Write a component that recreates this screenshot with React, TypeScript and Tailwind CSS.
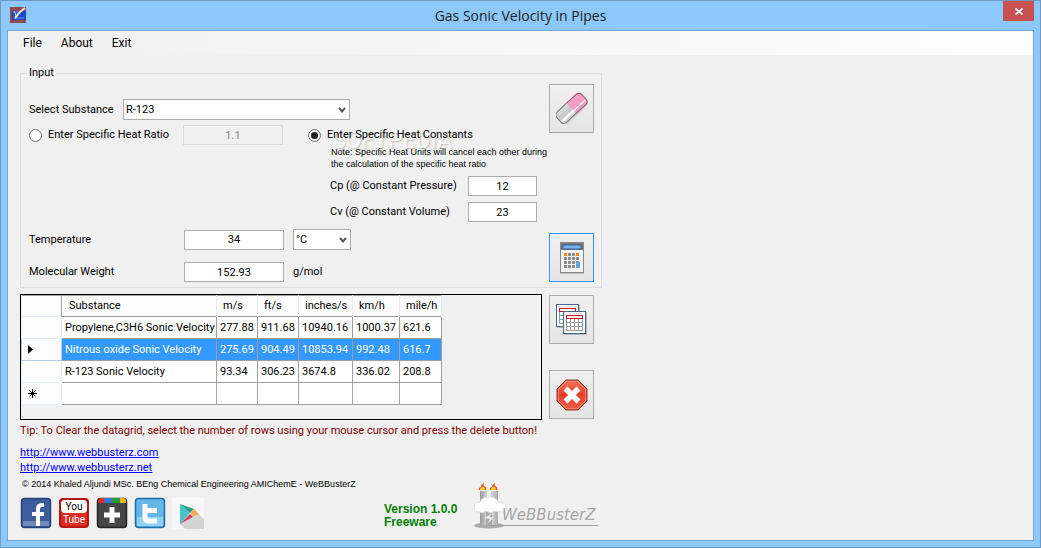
import React from 'react';

interface Reading {
  substance: string;
  values: string[];
}

const columns = ['m/s', 'ft/s', 'inches/s', 'km/h', 'mile/h'];

const readings: Reading[] = [
  { substance: 'Propylene,C3H6 Sonic Velocity', values: ['277.88', '911.68', '10940.16', '1000.37', '621.6'] },
  { substance: 'Nitrous oxide Sonic Velocity', values: ['275.69', '904.49', '10853.94', '992.48', '616.7'] },
  { substance: 'R-123 Sonic Velocity', values: ['93.34', '306.23', '3674.8', '336.02', '208.8'] },
  { substance: '', values: ['', '', '', '', ''] },
];

const SELECTED_ROW = 1;

const field = 'h-5 shrink-0 border border-[#abadb3] bg-white text-center outline-none';

function AppIcon() {
  return (
    <svg viewBox="0 0 16 16" className="h-4 w-4" aria-hidden="true">
      <rect width="16" height="16" fill="#8f4a50" />
      <rect x="2" y="4" width="14" height="9" fill="#1748c8" />
      <path d="M3 5h5M5 11h9" stroke="#6f9df2" />
      <path d="M4 4q3 4 1 8" fill="none" stroke="#c9d6f2" />
      <path d="M15 1 10 5l-5 6" fill="none" stroke="#f1dfc6" strokeWidth="2" />
    </svg>
  );
}

function EraserIcon() {
  return (
    <svg viewBox="0 0 32 32" className="h-8 w-8" aria-hidden="true">
      <defs>
        <linearGradient id="rubber" x1="0" y1="0" x2="0" y2="1">
          <stop offset="0" stopColor="#dcdcdc" />
          <stop offset=".6" stopColor="#c2c4c5" />
          <stop offset=".65" stopColor="#f4f4f4" />
          <stop offset="1" stopColor="#c8c8c8" />
        </linearGradient>
      </defs>
      <g transform="rotate(-43 16 16)">
        <rect x="-1" y="10" width="34" height="14" rx="5" fill="#000" fillOpacity=".12" />
        <path d="M16 8h13q4 0 4 5v5q0 4-4 4H16z" fill="#f2a0c2" />
        <path d="M16 8H3q-4 0-4 5v5q0 4 4 4h13z" fill="url(#rubber)" />
        <path d="M0 18.500h32" stroke="#fff" strokeWidth="1.200" />
        <path d="M16 8h13q4 0 4 5v5q0 4-4 4H16" fill="none" stroke="#a0527a" />
        <path d="M16 8H3q-4 0-4 5v5q0 4 4 4h13" fill="none" stroke="#727577" />
      </g>
    </svg>
  );
}

function CalculatorIcon() {
  const rows = [13, 17, 21, 25];
  const cols = [5, 9, 13, 17];
  return (
    <svg viewBox="0 0 24 32" className="h-8 w-6" aria-hidden="true">
      <path d="M0 31.500h24" stroke="#bbb" />
      <rect x=".5" y=".5" width="23" height="30" fill="#f3f3f3" stroke="#878787" />
      <rect x="1" y="1" width="22" height="7" fill="#777" />
      <rect x="3" y="3" width="18" height="4" fill="#73b4f2" stroke="#35618f" />
      {rows.map((y) => cols.map((x) => (
        <rect
          key={`${x}-${y}`}
          x={x - 1}
          y={y - 2}
          width="3"
          height="3"
          fill={y === 13 && (x === 5 || x === 17) ? '#f28321' : '#8b8b8b'}
        />
      )))}
      <rect x="16" y="20" width="4" height="6" fill="#5ea5e8" />
    </svg>
  );
}

function Sheet({ x, y }: { x: number; y: number }) {
  return (
    <g transform={`translate(${x} ${y})`}>
      <path d="M1 23.500h22.500V1" fill="none" stroke="#000" strokeOpacity=".2" />
      <rect x=".5" y=".5" width="22" height="22" fill="#fff" stroke="#47698e" />
      <path d="M3 2.500h17" stroke="#ddd" />
      <path d="M3.500 8v11.500h16V8M3.500 11.500h16M3.500 15.500h16M7.500 8v11.500M11.500 8v11.500M15.500 8v11.500" fill="none" stroke="#999" />
      <rect x="3.500" y="4.500" width="16" height="3" fill="#fff" stroke="#cc1219" />
    </g>
  );
}

function SheetsIcon() {
  return (
    <svg viewBox="0 0 32 32" className="h-8 w-8" aria-hidden="true">
      <Sheet x={0} y={0} />
      <Sheet x={7} y={7} />
    </svg>
  );
}

function CloseIcon() {
  return (
    <svg viewBox="0 0 32 32" className="h-8 w-8" aria-hidden="true">
      <defs>
        <linearGradient id="stop" x1="0" y1="0" x2="0" y2="1">
          <stop offset="0" stopColor="#f3795f" />
          <stop offset=".5" stopColor="#e63d28" />
          <stop offset="1" stopColor="#e86149" />
        </linearGradient>
      </defs>
      <path d="M10 1h12l9 9v12l-9 9H10l-9-9V10z" fill="url(#stop)" stroke="#9c3327" />
      <path d="M10.500 2.500h11l8 8v11l-8 8h-11l-8-8v-11z" fill="none" stroke="#f39580" strokeOpacity=".7" />
      <path d="m9.500 9.500 13 13M22.500 9.500l-13 13" stroke="#fff" strokeWidth="5.500" />
    </svg>
  );
}

function PlayIcon() {
  return (
    <svg viewBox="0 0 32 32" className="h-8 w-8" aria-hidden="true">
      <rect width="32" height="32" fill="#f7f7f7" />
      <path d="m8 27 19-10 5 5v10H13z" fill="#d3d3d3" />
      <path d="M8 7v20l10-11z" fill="#42c3c7" />
      <path d="m8 7 10 9 4-4z" fill="#2b9c88" />
      <path d="m8 27 10-10 3 3z" fill="#d73b60" />
      <path d="m18 16 4-4 5 5-6 3z" fill="#f3ad59" />
    </svg>
  );
}

function FacebookIcon() {
  return (
    <svg viewBox="0 0 32 32" className="h-8 w-8" aria-hidden="true">
      <rect x="1.500" y="1.500" width="29" height="29" rx="3" fill="#3d5c9c" stroke="#27427a" strokeWidth="1.500" />
      <path d="M3 24h26v5H3z" fill="#7188b9" />
      <path d="M16 29V19h-4v-4h4v-3q0-6 6-6h2v4h-2q-2 0-2 2v3h4v4h-4v10z" fill="#fff" />
    </svg>
  );
}

function GooglePlusIcon() {
  return (
    <svg viewBox="0 0 32 32" className="h-8 w-8" aria-hidden="true">
      <rect x="1.500" y="1.500" width="29" height="29" rx="3" fill="#464646" stroke="#222" strokeWidth="1.500" />
      <path d="M2 6V4q0-3 3-3h3v5z" fill="#e42822" />
      <path d="M8 1h8v5H8z" fill="#3874db" />
      <path d="M16 1h8v5h-8z" fill="#249a36" />
      <path d="M24 1h3q3 0 3 3v2h-6z" fill="#f2b52b" />
      <path d="M16 10v16M8 18h16" stroke="#fff" strokeWidth="5" />
    </svg>
  );
}

function TwitterIcon() {
  return (
    <svg viewBox="0 0 32 32" className="h-8 w-8" aria-hidden="true">
      <rect x="1.500" y="1.500" width="29" height="29" rx="3" fill="#66b7e9" stroke="#1e6da5" strokeWidth="1.500" />
      <path d="M3 20h26v9H3z" fill="#91d2f3" />
      <path d="M11 7v13q0 4 4 4h8M11 13.500h12" fill="none" stroke="#fff" strokeWidth="5" strokeLinejoin="round" />
    </svg>
  );
}

function FactoryLogo() {
  return (
    <div className="relative h-12 w-31">
      <svg viewBox="0 0 124 48" className="h-12 w-31" aria-hidden="true">
        <defs>
          <linearGradient id="stack">
            <stop offset="0" stopColor="#999" />
            <stop offset=".5" stopColor="#e4e4e4" />
            <stop offset="1" stopColor="#aaa" />
          </linearGradient>
        </defs>
        <g transform="translate(0 2)">
          <ellipse cx="15" cy="42.500" rx="15" ry="3" fill="#aaa" />
          <path d="M15 42.500h109" stroke="#a0a0a0" />
          <path d="M6 8h7v34H6zM17 8h7v34h-7z" fill="url(#stack)" />
          <path d="M12 26h6v16h-6z" fill="#aaa" />
          <path d="M5 7q-1-2 2-3 0-3 3-4-1 3 2 4 1 1 0 3zM16 7q-1-2 2-3 0-3 3-4-1 3 2 4 1 1 0 3z" fill="#e55924" />
          <path d="M6 7q0-2 2-3 1 1 1-1 3 3 1 4zM17 7q0-2 2-3 1 1 1-1 3 3 1 4z" fill="#f9d329" />
          <path d="M5 29q-5 0-5-5t6-5q2-5 9-5t9 5q8 0 8 5t-5 5l-7-1-3 2-5-2q-4 3-7 1z" fill="#fff" stroke="#ddd" />
          <path d="m19 30-9 5 6 1-3 5 7-7-5 0z" fill="#ececec" />
        </g>
      </svg>
      <span className="absolute top-[18px] left-7 font-['DejaVu_Sans'] text-[15px] leading-8 text-[#a5a5a5] italic">WeBBusterZ</span>
    </div>
  );
}

function ToolButton({ label, focused, children }: { label: string; focused?: boolean; children: React.ReactNode }) {
  return (
    <button
      type="button"
      aria-label={label}
      className={`flex h-[49px] w-[45px] shrink-0 items-center justify-center border bg-linear-to-b from-[#f0f0f0] to-[#e5e5e5] ${focused ? 'border-[#3399ff]' : 'border-[#acacac]'}`}
    >
      {children}
    </button>
  );
}

function Select({ id, value, label, className }: { id: string; value: string; label?: string; className: string }) {
  return (
    <div className={`relative h-[21px] shrink-0 ${className}`}>
      <select
        id={id}
        aria-label={label}
        className="block h-full w-full appearance-none border border-[#abadb3] bg-white pl-0.5 outline-none"
      >
        <option>{value}</option>
      </select>
      <svg viewBox="0 0 8 7" className="pointer-events-none absolute top-2 right-1 h-[7px] w-2" aria-hidden="true">
        <path d="m1 1 3 3.500L7 1" fill="none" stroke="#555" strokeWidth="2" />
      </svg>
    </div>
  );
}

function HeatRadio({ id, label, checked }: { id: string; label: string; checked?: boolean }) {
  return (
    <div className="flex items-center gap-1.5">
      <input
        type="radio"
        name="heat"
        id={id}
        defaultChecked={checked}
        className="h-[13px] w-[13px] shrink-0 appearance-none rounded-full border border-[#707070] bg-white p-0.5 checked:bg-[#222] checked:bg-clip-content"
      />
      <label htmlFor={id} className="whitespace-nowrap">{label}</label>
    </div>
  );
}

function InputGroup() {
  return (
    <fieldset className="flex w-[582px] justify-between border border-[#dcdcdc] pr-[7px] pb-[5px] pl-2">
      <legend className="-ml-0.5 px-0.5 leading-[14px]">Input</legend>
      <div className="mt-[19px] w-[510px]">
        <div className="flex items-center">
          <label htmlFor="substance" className="w-[94px]">Select Substance</label>
          <Select id="substance" value="R-123" className="w-[227px]" />
        </div>

        <div className="mt-[5px] flex items-start">
          <div className="flex h-5 w-[279px] shrink-0 items-center">
            <div className="w-[154px]">
              <HeatRadio id="ratio" label="Enter Specific Heat Ratio" />
            </div>
            <input
              aria-label="Specific heat ratio"
              defaultValue="1.1"
              disabled
              className="h-5 w-[100px] border border-[#d9d9d9] bg-[#f0f0f0] text-center text-[#838383]"
            />
          </div>
          <div className="relative isolate">
            <div className="flex h-5 items-center">
              <HeatRadio id="constants" label="Enter Specific Heat Constants" checked />
            </div>
            <p className="mt-px ml-[23px] font-['Liberation_Sans'] text-[9px] leading-3 whitespace-nowrap">
              Note: Specific Heat Units will cancel each other during
              <br />
              the calculation of the specific heat ratio
            </p>
            {/* faint watermark behind the labels */}
            <div className="pointer-events-none absolute top-1.5 left-6 -z-10 text-center text-[#f8f8f8]">
              <p className="text-[23px] leading-5 text-shadow-[1px_1px_1px_rgb(0_0_0/0.2)]">SOFTPEDIA</p>
              <p className="text-[9px] leading-3">www.softpedia.com</p>
            </div>
            <div className="mt-1.5 ml-[22px] flex items-center">
              <label htmlFor="cp" className="w-[138px] shrink-0">Cp (@ Constant Pressure)</label>
              <input id="cp" defaultValue="12" className={`${field} w-[69px]`} />
            </div>
            <div className="mt-1.5 ml-[22px] flex items-center">
              <label htmlFor="cv" className="w-[138px] shrink-0">Cv (@ Constant Volume)</label>
              <input id="cv" defaultValue="23" className={`${field} w-[69px]`} />
            </div>
          </div>
        </div>

        <div className="mt-[7px] flex items-center">
          <label htmlFor="temperature" className="w-[155px]">Temperature</label>
          <input id="temperature" defaultValue="34" className={`${field} mr-[9px] w-[100px]`} />
          <Select id="unit" value="°C" label="Temperature unit" className="w-[58px]" />
        </div>
        <div className="mt-3 flex items-center">
          <label htmlFor="weight" className="w-[155px]">Molecular Weight</label>
          <input id="weight" defaultValue="152.93" className={`${field} mr-[9px] w-[100px]`} />
          <span>g/mol</span>
        </div>
      </div>
      <div className="flex flex-col justify-between pt-1">
        <ToolButton label="Clear"><EraserIcon /></ToolButton>
        <ToolButton label="Calculate" focused><CalculatorIcon /></ToolButton>
      </div>
    </fieldset>
  );
}

function RowMarker({ index }: { index: number }) {
  if (index === SELECTED_ROW) {
    return (
      <svg viewBox="0 0 5 9" className="ml-1.5 h-[9px] w-[5px]" aria-label="Current row">
        <path d="M0 0v9l5-4.500z" />
      </svg>
    );
  }
  if (index === readings.length - 1) {
    return (
      <svg viewBox="0 0 9 9" className="ml-1.5 h-[9px] w-[9px]" aria-label="New row">
        <path d="M4.500 0v9M0 4.500h9M1.500 1.500l6 6M7.500 1.500l-6 6" stroke="#000" />
      </svg>
    );
  }
  return null;
}

function ResultsTable() {
  return (
    <div className="h-[126px] w-[522px] border border-black">
      <table className="w-[420px] table-fixed border-collapse whitespace-nowrap">
        <colgroup>
          <col className="w-10" />
          <col className="w-[155px]" />
          <col className="w-[41px]" />
          <col className="w-[41px]" />
          <col className="w-[54px]" />
          <col className="w-[47px]" />
          <col className="w-[42px]" />
        </colgroup>
        <thead>
          <tr className="h-[21px] border-y border-[#a0a0a0] bg-[#fcfcfc] text-left">
            <th className="border-r border-[#a0a0a0]" aria-label="Row" />
            <th className="border-r border-[#e3edf8] pl-[7px] font-normal">Substance</th>
            {columns.map((column) => (
              <th key={column} className="border-r border-[#e3edf8] pl-1.5 font-normal">{column}</th>
            ))}
          </tr>
        </thead>
        <tbody>
          {readings.map((reading, index) => (
            <tr key={index} className={`h-[22px] ${index === SELECTED_ROW ? 'bg-[#3399ff] text-white' : 'bg-white'}`}>
              <th className={`border bg-[#fcfcfc] ${index === SELECTED_ROW ? 'border-[#b8cde3]' : 'border-[#e8eef6]'}`}>
                <RowMarker index={index} />
              </th>
              <td className="border border-[#a0a0a0] pl-[3px]">{reading.substance}</td>
              {reading.values.map((value, i) => (
                <td key={i} className="border border-[#a0a0a0] pl-[3px]">{value}</td>
              ))}
            </tr>
          ))}
        </tbody>
      </table>
    </div>
  );
}

function Footer() {
  return (
    <footer className="flex w-[582px] items-end">
      <div className="w-[364px]">
        <div className="flex flex-col items-start text-[#0000ff] underline">
          <a href="http://www.webbusterz.com" className="leading-[15px]">http://www.webbusterz.com</a>
          <a href="http://www.webbusterz.net" className="leading-[15px]">http://www.webbusterz.net</a>
        </div>
        <p className="mt-px pl-0.5 font-['Liberation_Sans'] text-[9px] leading-4 whitespace-nowrap">
          © 2014 Khaled Aljundi MSc. BEng Chemical Engineering AMIChemE - WeBBusterZ
        </p>
        <div className="mt-[5px] flex gap-1.5">
          <a href="#facebook" aria-label="Facebook"><FacebookIcon /></a>
          <a
            href="#youtube"
            className="mx-px my-px flex h-[30px] w-[30px] flex-col rounded border-2 border-[#b51613] bg-[#df2b24] text-center text-[10px] leading-[13px]"
          >
            <span className="rounded-sm bg-white">You</span>
            <span className="text-white">Tube</span>
          </a>
          <a href="#google-plus" aria-label="Google Plus"><GooglePlusIcon /></a>
          <a href="#twitter" aria-label="Twitter"><TwitterIcon /></a>
          <a href="#google-play" aria-label="Google Play"><PlayIcon /></a>
        </div>
      </div>
      <p className="w-[90px] font-['Liberation_Sans'] text-[12px] leading-[13px] font-bold text-[#008000]">
        Version 1.0.0
        <br />
        Freeware
      </p>
      <FactoryLogo />
    </footer>
  );
}

export default function App() {
  return (
    <div className="flex min-h-screen flex-col border border-[#6c9ac5] bg-[#8dc8fb] px-1.5 pb-1.5 font-[Roboto,sans-serif] text-[11px] leading-[14px] text-black">
      {/* Title bar */}
      <header className="flex h-[29px] items-start justify-between">
        <div className="flex w-[45px] pt-1.5 pl-[3px]"><AppIcon /></div>
        <h1 className="pt-1 font-['Open_Sans'] text-[14px] leading-[22px] text-[#222]">Gas Sonic Velocity in Pipes</h1>
        <div className="flex w-[45px] justify-end">
          <button type="button" aria-label="Close" className="flex h-5 w-[31px] items-center justify-center bg-[#c75050]">
            <svg viewBox="0 0 8 7" className="h-[7px] w-2" aria-hidden="true">
              <path d="m.5.5 7 6m0-6-7 6" stroke="#fff" strokeWidth="1.800" />
            </svg>
          </button>
        </div>
      </header>

      <main className="flex-1 border border-[#70a7d8] bg-[#f0f0f0]">
        <nav className="flex h-6 items-center gap-[19px] bg-linear-to-r from-[#f0f0f0] to-[#fdfdfd] pl-[15px] text-[12px]">
          <button type="button">File</button>
          <button type="button">About</button>
          <button type="button">Exit</button>
        </nav>

        <div className="px-3 pt-[11px]">
          <InputGroup />
          <div className="mt-1.5 flex gap-[7px]">
            <ResultsTable />
            <div className="flex flex-col justify-between pt-px pb-px">
              <ToolButton label="Show tables"><SheetsIcon /></ToolButton>
              <ToolButton label="Exit"><CloseIcon /></ToolButton>
            </div>
          </div>
          <p className="mt-1 mb-[7px] text-[#800000]">
            Tip: To Clear the datagrid, select the number of rows using your mouse cursor and press the delete button!
          </p>
          <Footer />
        </div>
      </main>
    </div>
  );
}
